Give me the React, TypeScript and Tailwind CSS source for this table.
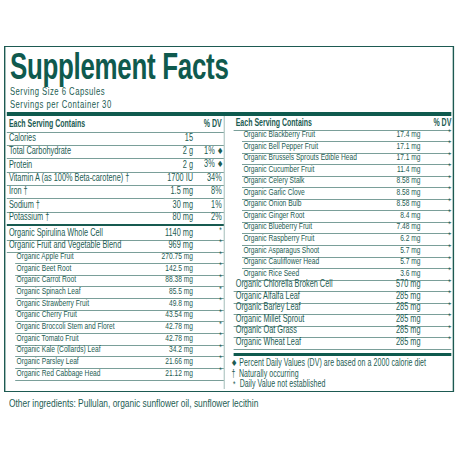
import React from 'react';

type Row = { name: string; amt?: string; dv?: string; mark?: string; sub?: boolean };

const topRows: Row[] = [
  { name: 'Calories', amt: '15' },
  { name: 'Total Carbohydrate', amt: '2 g', dv: '1%', mark: '◆' },
  { name: 'Protein', amt: '2 g', dv: '3%', mark: '◆' },
  { name: 'Vitamin A (as 100% Beta-carotene) †', amt: '1700 IU', dv: '34%' },
  { name: 'Iron †', amt: '1.5 mg', dv: '8%' },
  { name: 'Sodium †', amt: '30 mg', dv: '1%' },
  { name: 'Potassium †', amt: '80 mg', dv: '2%' },
];

const leftRows: Row[] = [
  { name: 'Organic Spirulina Whole Cell', amt: '1140 mg', dv: '*' },
  { name: 'Organic Fruit and Vegetable Blend', amt: '969 mg', dv: '*' },
  { name: 'Organic Apple Fruit', amt: '270.75 mg', dv: '*', sub: true },
  { name: 'Organic Beet Root', amt: '142.5 mg', dv: '*', sub: true },
  { name: 'Organic Carrot Root', amt: '88.38 mg', dv: '*', sub: true },
  { name: 'Organic Spinach Leaf', amt: '85.5 mg', dv: '*', sub: true },
  { name: 'Organic Strawberry Fruit', amt: '49.8 mg', dv: '*', sub: true },
  { name: 'Organic Cherry Fruit', amt: '43.54 mg', dv: '*', sub: true },
  { name: 'Organic Broccoli Stem and Floret', amt: '42.78 mg', dv: '*', sub: true },
  { name: 'Organic Tomato Fruit', amt: '42.78 mg', dv: '*', sub: true },
  { name: 'Organic Kale (Collards) Leaf', amt: '34.2 mg', dv: '*', sub: true },
  { name: 'Organic Parsley Leaf', amt: '21.66 mg', dv: '*', sub: true },
  { name: 'Organic Red Cabbage Head', amt: '21.12 mg', dv: '*', sub: true },
];

const rightRows: Row[] = [
  { name: 'Organic Blackberry Fruit', amt: '17.4 mg', dv: '*', sub: true },
  { name: 'Organic Bell Pepper Fruit', amt: '17.1 mg', dv: '*', sub: true },
  { name: 'Organic Brussels Sprouts Edible Head', amt: '17.1 mg', dv: '*', sub: true },
  { name: 'Organic Cucumber Fruit', amt: '11.4 mg', dv: '*', sub: true },
  { name: 'Organic Celery Stalk', amt: '8.58 mg', dv: '*', sub: true },
  { name: 'Organic Garlic Clove', amt: '8.58 mg', dv: '*', sub: true },
  { name: 'Organic Onion Bulb', amt: '8.58 mg', dv: '*', sub: true },
  { name: 'Organic Ginger Root', amt: '8.4 mg', dv: '*', sub: true },
  { name: 'Organic Blueberry Fruit', amt: '7.48 mg', dv: '*', sub: true },
  { name: 'Organic Raspberry Fruit', amt: '6.2 mg', dv: '*', sub: true },
  { name: 'Organic Asparagus Shoot', amt: '5.7 mg', dv: '*', sub: true },
  { name: 'Organic Cauliflower Head', amt: '5.7 mg', dv: '*', sub: true },
  { name: 'Organic Rice Seed', amt: '3.6 mg', dv: '*', sub: true },
  { name: 'Organic Chlorella Broken Cell', amt: '570 mg', dv: '*' },
  { name: 'Organic Alfalfa Leaf', amt: '285 mg', dv: '*' },
  { name: 'Organic Barley Leaf', amt: '285 mg', dv: '*' },
  { name: 'Organic Millet Sprout', amt: '285 mg', dv: '*' },
  { name: 'Organic Oat Grass', amt: '285 mg', dv: '*' },
  { name: 'Organic Wheat Leaf', amt: '285 mg', dv: '*' },
];

// the label is drawn at 1/0.7 width and squeezed back with scale-x, to mimic a condensed face
const FactRow = ({ row, h, pr, last }: { row: Row; h: string; pr: string; last?: boolean }) => (
  <div
    className={`flex items-end pb-[2.5px] leading-none ${h} ${
      last ? 'border-b-2 border-[#175a50]' : 'border-b border-[#7a9f99]'
    } ${row.sub ? 'ml-[12px] text-[9.5px]' : 'text-[10.5px]'}`}
  >
    <span className={`flex-1 whitespace-nowrap ${row.sub ? 'pl-[2px]' : 'pl-[3px]'}`}>{row.name}</span>
    <span className="text-right whitespace-nowrap">{row.amt}</span>
    <span className={`w-[44px] text-right whitespace-nowrap ${pr}`}>
      {row.dv === '*' ? <span className="text-[9px] relative top-[-2px]">*</span> : row.dv}
      {row.mark && <span className="ml-[4px] text-[8px] relative top-[-1px]">{row.mark}</span>}
    </span>
  </div>
);

export default function App() {
  return (
    <div className="w-[460px] h-[460px] overflow-hidden bg-white pt-[46px] pl-[4px] font-['Liberation_Sans',sans-serif] text-[#1c5c52]">
      <div className="w-[643px] origin-top-left scale-x-[0.7] border-y-[1.5px] border-x-[2px] border-[#1d5a52] px-[2px] pb-[2px]">
        <div className="pl-[4.5px] pt-[3.5px] text-[37px] leading-[32px] font-bold tracking-[-0.4px] text-[#0f5a4e]">
          Supplement Facts
        </div>
        <div className="pl-[4.5px] mt-[2.5px] text-[11px] leading-[12.5px] tracking-[0.7px]">
          <div>Serving Size 6 Capsules</div>
          <div>Servings per Container 30</div>
        </div>
        <div className="mt-[1.5px] h-[4px] bg-[#0f5a4e]" />
        <div className="flex">
          {/* left column */}
          <div className="w-[311px] border-r-[1.5px] border-[#7a9f99]">
            <div className="flex h-[17px] items-end pb-[3px] leading-none border-b border-[#7a9f99] text-[10px] font-bold">
              <span className="flex-1 pl-[3px]">Each Serving Contains</span>
              <span className="pr-[3px]">% DV</span>
            </div>
            {topRows.map((r, i) => (
              <FactRow key={r.name} row={r} h="h-[13.4px]" pr="pr-[3px]" last={i === topRows.length - 1} />
            ))}
            <div className="mt-[3px]">
              {leftRows.map((r) => (
                <FactRow key={r.name} row={r} h="h-[11.65px]" pr="pr-[3px]" />
              ))}
            </div>
          </div>
          {/* right column */}
          <div className="flex-1 pl-[13px]">
            <div className="flex h-[15px] items-end pb-[2px] leading-none border-b border-[#7a9f99] text-[10px] font-bold">
              <span className="flex-1 pl-[3px]">Each Serving Contains</span>
              <span>% DV</span>
            </div>
            {rightRows.map((r) => (
              <FactRow key={r.name} row={r} h="h-[11.56px]" pr="pr-[1px]" />
            ))}
            <div className="mt-[3px] h-[3px] bg-[#0f5a4e]" />
            <div className="-ml-[3px] pt-[2px] text-[10px] leading-[10px] tracking-[0.1px] whitespace-nowrap">
              <div>
                <span className="text-[8px] mr-[5px] relative top-[-1px]">◆</span>Percent Daily Values (DV) are based on a 2000 calorie diet
              </div>
              <div>
                <span className="mr-[5px]">†</span>Naturally occurring
              </div>
              <div>
                <span className="text-[9px] ml-[2px] mr-[6px]">*</span>Daily Value not established
              </div>
            </div>
          </div>
        </div>
      </div>
      <div className="pl-[5px] pt-[5px]">
        <div className="w-[330px] origin-top-left scale-x-[0.8] text-[10.5px] leading-[12px] whitespace-nowrap text-[#1c5c52]">
          Other ingredients: Pullulan, organic sunflower oil, sunflower lecithin
        </div>
      </div>
    </div>
  );
}
